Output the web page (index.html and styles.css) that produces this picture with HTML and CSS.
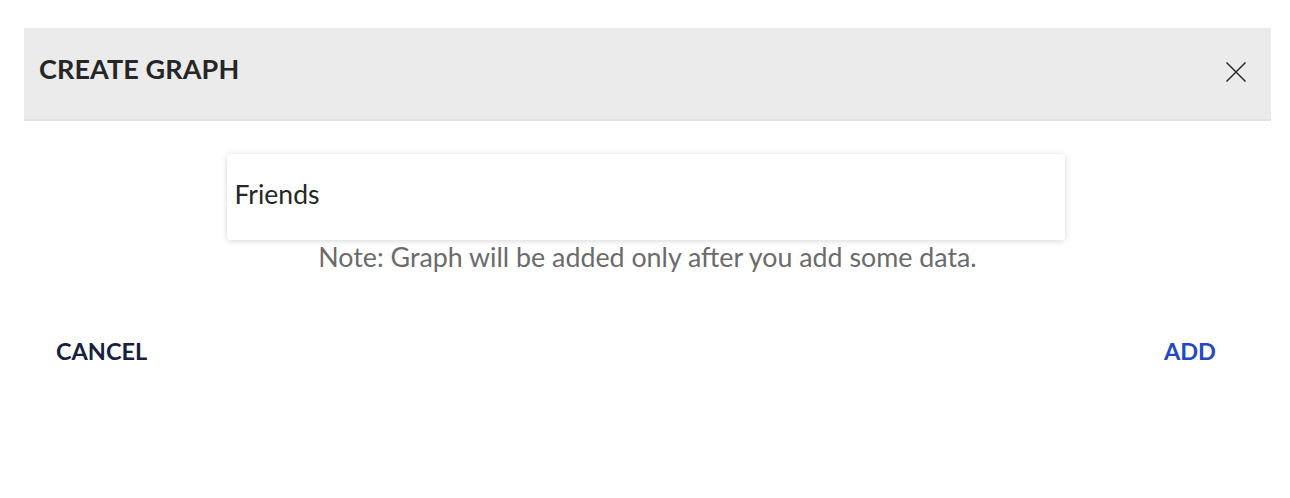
FILE: index.html
```html
<!DOCTYPE html>
<html>
<head>
<meta charset="utf-8">
<link rel="stylesheet" href="styles.css">
</head>
<body>
<div class="dialog">
  <div class="dialog-header">
    <h2 class="dialog-title">CREATE GRAPH</h2>
    <button class="close-btn" aria-label="Close">
      <svg width="22" height="22" viewBox="0 0 22 22"><path d="M1.5 1.5 L20.5 20.5 M20.5 1.5 L1.5 20.5" stroke="#2b2b2b" stroke-width="1.5" fill="none"/></svg>
    </button>
  </div>
  <div class="dialog-body">
    <div class="input-card">
      <input class="name-input" type="text" value="Friends">
    </div>
    <p class="note">Note: Graph will be added only after you add some data.</p>
  </div>
  <div class="dialog-actions">
    <button class="btn btn-cancel">CANCEL</button>
    <button class="btn btn-add">ADD</button>
  </div>
</div>
</body>
</html>
```
FILE: styles.css
```css
* { box-sizing: border-box; }
body {
  margin: 0;
  background: #fff;
  font-family: Lato, "Open Sans", sans-serif;
}
.dialog {
  margin: 28px 19px 0 24px;
}
.dialog-header {
  height: 93px;
  background: #ebebeb;
  border-bottom: 2px solid #e1e1e1;
  display: flex;
  align-items: center;
  justify-content: space-between;
  padding: 0 24px 10px 15px;
}
.dialog-title {
  margin: 0;
  font-size: 27px;
  font-weight: 700;
  color: #262626;
  letter-spacing: 0.1px;
}
.close-btn {
  background: none;
  border: 0;
  padding: 0;
  width: 22px;
  height: 22px;
  display: flex;
  margin-top: 7px;
  cursor: pointer;
}
.dialog-body {
  display: flex;
  flex-direction: column;
  align-items: center;
  padding-top: 33px;
}
.input-card {
  width: 838px;
  height: 86px;
  margin-left: -4px;
  background: #fff;
  border-radius: 3px;
  box-shadow: 0 1px 6px rgba(0,0,0,0.16);
  display: flex;
  align-items: center;
  padding-bottom: 6px;
}
.name-input {
  width: 100%;
  border: 0;
  outline: none;
  background: transparent;
  font-family: inherit;
  font-size: 26.5px;
  color: #262626;
  padding: 0 8px;
}
.note {
  margin: 1px 0 0 0;
  font-size: 26.8px;
  line-height: 32px;
  color: #6b6b6b;
}
.dialog-actions {
  display: flex;
  justify-content: space-between;
  padding: 64px 55px 0 32px;
}
.btn {
  background: none;
  border: 0;
  padding: 0;
  font-family: inherit;
  font-size: 23.5px;
  font-weight: 700;
  cursor: pointer;
}
.btn-cancel { color: #16213f; }
.btn-add { color: #2448c2; }
```
